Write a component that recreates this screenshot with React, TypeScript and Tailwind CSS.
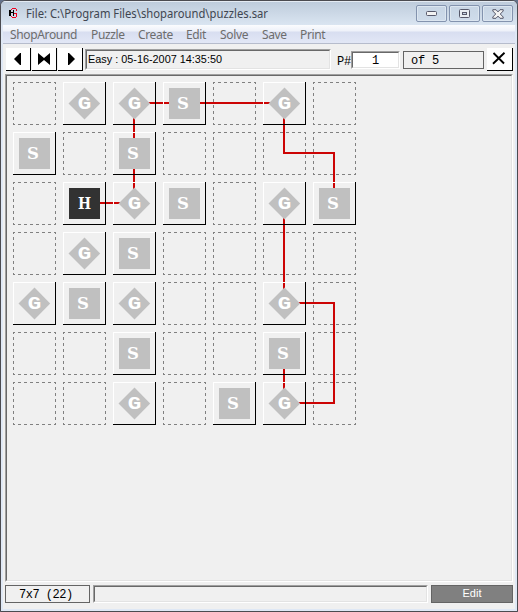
import type { ReactNode } from "react";

const rows = [".GGS.G.", "S.S....", ".HGS.GS", ".GS....", "GSG..G.", "..S..S.", "..G.SG."];
const menus = [
  { label: "ShopAround", w: "w-[81px]" },
  { label: "Puzzle", w: "w-[47px]" },
  { label: "Create", w: "w-[48px]" },
  { label: "Edit", w: "w-[34px]" },
  { label: "Solve", w: "w-[42px]" },
  { label: "Save", w: "w-[38px]" },
  { label: "Print", w: "w-[40px]" },
];

const letterPlacement: Record<string, string> = {
  G: "translate(21.5 27) scale(1.25 1)",
  S: "translate(20 27) scale(1 1)",
  H: "translate(21.5 27) scale(.84 1)",
};

function Cell({ kind }: { kind: string }) {
  if (kind === ".") {
    return (
      <svg className="block h-[43px] w-[43px]" viewBox="0 0 43 43" fill="none" stroke="#808080" shapeRendering="crispEdges">
        <path d="M0 .5H43M0 42.5H43M.5 0V43M42.5 0V43" strokeDasharray="3 3" strokeDashoffset="1" />
      </svg>
    );
  }
  const isG = kind === "G";
  return (
    <div className="relative z-10 h-[43px] w-[43px]">
      <svg className="block" width="43" height="43" viewBox="0 0 43 43">
        {isG ? (
          <path d="M21.5 5.5L37.2 21.5L21.5 37.5L5.5 21.5Z" fill="#c0c0c0" />
        ) : (
          <rect x="6" y="6" width="31" height="31" fill={kind === "H" ? "#323232" : "#c0c0c0"} />
        )}
        <path d="M0 .5H43M.5 0V43" stroke="#fff" />
        <path d="M42.5 0V43M0 42.5H42" stroke="#000" />
        <text
          transform={letterPlacement[kind]}
          textAnchor="middle"
          fill="#fff"
          className={
            isG
              ? "font-['Liberation_Mono',monospace] text-[18px] font-bold"
              : "font-['DejaVu_Serif',serif] text-[16.5px] font-bold"
          }
        >
          {kind}
        </text>
      </svg>
    </div>
  );
}

function ToolButton({ children, wide = false }: { children: ReactNode; wide?: boolean }) {
  return (
    <button className={`flex h-[23px] shrink-0 items-center justify-center border-r border-b border-black bg-white ${wide ? "w-[26px]" : "w-[25px]"}`}>
      {children}
    </button>
  );
}

function CaptionButton({ children }: { children: ReactNode }) {
  return (
    <button className="flex h-[17px] w-[31px] items-center justify-center rounded-[2px] border border-[#8393ae] bg-gradient-to-b from-[#c7d5e4] to-[#cfdceb] shadow-[inset_0_0_0_1px_#dce6f0]">
      {children}
    </button>
  );
}

const sunken = "border border-t-[#a0a0a0] border-l-[#a0a0a0] border-r-white border-b-white";
const sunkenInner = "h-full w-full border border-t-[#696969] border-l-[#696969] border-r-[#e3e3e3] border-b-[#e3e3e3]";

export default function App() {
  return (
    <div className="h-[612px] w-[518px] bg-[#63718a]">
      <div className="flex h-full w-full flex-col overflow-hidden rounded-t-[6px] border border-[#4b4b50] bg-[#dfe8f5] px-[2px] pb-[2px] font-['Noto_Sans',sans-serif]">
        <header className="-mx-[2px] flex h-6 shrink-0 items-start bg-gradient-to-b from-[#bdcbdb] to-[#dae5f1] shadow-[inset_0_1px_0_#e4ebf3]">
          <svg className="mt-[7px] ml-[8px] shrink-0" width="9" height="11" viewBox="0 0 9 11" shapeRendering="crispEdges">
            <path d="M3 0H7V1H3ZM2 1H3V2H2ZM7 1H8V3H7ZM5 5H8V6H5ZM7 6H8V9H7ZM2 8H3V9H2ZM3 9H7V10H3Z" fill="#f00020" />
            <path d="M0 2H2V4H4V2H5V8H4V5H2V8H0Z" fill="#000" />
          </svg>
          <h1 className="mt-[4px] ml-[7px] whitespace-pre text-[12px] leading-[17px] font-normal text-[#3f4650]">
            <svg className="block overflow-visible" width="250" height="18">
              <text x="1" y="13" fill="#3f4650" textLength="242" lengthAdjust="spacingAndGlyphs">File: C:\Program Files\shoparound\puzzles.sar</text>
            </svg>
          </h1>
          <div className="mt-[4px] mr-[4px] ml-auto flex gap-[2px]">
            <CaptionButton>
              <svg width="12" height="6"><rect x=".5" y=".5" width="10" height="4" rx="1" fill="#f2f2f2" stroke="#56586a" /></svg>
            </CaptionButton>
            <CaptionButton>
              <svg width="11" height="9"><rect x=".5" y=".5" width="10" height="8" rx="1" fill="#e8edf2" stroke="#56586a" /><rect x="3.5" y="3.5" width="4" height="2" fill="#c7d5e4" stroke="#56586a" /></svg>
            </CaptionButton>
            <CaptionButton>
              <svg width="12" height="10" viewBox="0 0 12 10"><path d="M.8.7H4L6 2.9L8 .7H11.2V2L8.3 5L11.2 8V9.3H8L6 7.1L4 9.3H.8V8L3.7 5L.8 2Z" fill="#f2f2f2" stroke="#56586a" /></svg>
            </CaptionButton>
          </div>
        </header>

        <nav className="flex h-[19px] shrink-0 border-b border-[#b6bccc] bg-[linear-gradient(#fbfcfe_0px,#eef1f9_6px,#d8def0_7px,#e2e7f6_18px)] pl-[7px] text-[12px]">
          {menus.map((m) => (
            <span key={m.label} className={`${m.w} shrink-0 leading-[19px] tracking-[-0.35px] text-[#6d6d6d]`}>{m.label}</span>
          ))}
        </nav>

        <main className="flex min-h-0 grow flex-col bg-[#f0f0f0] px-[2px]">
          <div className="flex h-[30px] shrink-0 pt-1 pl-px">
            <div className="flex gap-px">
              <ToolButton><svg width="25" height="22"><path d="M15 5V17H14L8 11L14 5Z" /></svg></ToolButton>
              <ToolButton><svg width="25" height="22"><path d="M6 5L12 10L18 5V17L12 12L6 17Z" /></svg></ToolButton>
              <ToolButton><svg width="25" height="22"><path d="M10 5V17H11L17 11L11 5Z" /></svg></ToolButton>
            </div>
            <div className={`mt-px ml-[2px] h-[21px] w-[246px] shrink-0 ${sunken}`}>
              <div className={`${sunkenInner} bg-[#f0f0f0] font-['Liberation_Sans',sans-serif] text-[11.5px] leading-[17px] whitespace-pre text-black`}>
                <svg className="block" width="150" height="17"><text x="1" y="12" textLength="134" lengthAdjust="spacingAndGlyphs">Easy : 05-16-2007 14:35:50</text></svg>
              </div>
            </div>
            <div className="ml-[6px] w-[14px] shrink-0 pt-[6px] font-['Liberation_Mono',monospace] text-[12px] leading-[17px] tracking-[-0.2px]">P#</div>
            <div className={`mt-[3px] h-[18px] w-[49px] shrink-0 ${sunken}`}>
              <div className={`${sunkenInner} bg-white text-center font-['Liberation_Mono',monospace] text-[12px] leading-[16px]`}>1</div>
            </div>
            <div className="mt-[3px] ml-[3px] h-[18px] w-[81px] shrink-0 border border-[#646464] pl-[7px] font-['Liberation_Mono',monospace] text-[12px] leading-[18px] tracking-[-0.2px] whitespace-pre">of 5</div>
            <div className="ml-[3px]">
              <ToolButton wide>
                <svg className="mb-[2px] -ml-[2px]" width="14" height="13" viewBox="0 0 14 13" fill="none" stroke="#000"><path d="M1.5 1L12 11.5M12.5 .8L1 11.8" strokeWidth="1.9" /></svg>
              </ToolButton>
            </div>
          </div>

          <section className={`h-[508px] w-[508px] shrink-0 ${sunken}`}>
            <div className={`${sunkenInner} relative pt-[6px] pl-[6px]`}>
              <div className="grid w-max grid-cols-[repeat(7,43px)] gap-[7px]">
                {rows.map((row, r) => row.split("").map((kind, c) => <Cell key={`${r}-${c}`} kind={kind} />))}
              </div>
              <svg className="absolute top-[6px] left-[6px]" width="343" height="343" fill="none" stroke="#cc0404" strokeWidth="2">
                <path d="M71 121H121V21H271V71H321V121" />
                <path d="M271 121V221H321V321H271V271" />
              </svg>
            </div>
          </section>

          <footer className="mt-[3px] flex h-[18px] shrink-0">
            <div className="w-[85px] border border-[#646464] pl-[13px] font-['Liberation_Mono',monospace] text-[12px] leading-[18px] tracking-[-0.5px] whitespace-pre">7x7 (22)</div>
            <div className={`ml-[3px] w-[335px] ${sunken}`}><div className={sunkenInner} /></div>
            <div className="ml-[3px] w-[82px] border border-[#646464] bg-[#808080] text-center font-['Liberation_Sans',sans-serif] text-[11px] leading-[15px] text-white">Edit</div>
          </footer>
        </main>
      </div>
    </div>
  );
}
